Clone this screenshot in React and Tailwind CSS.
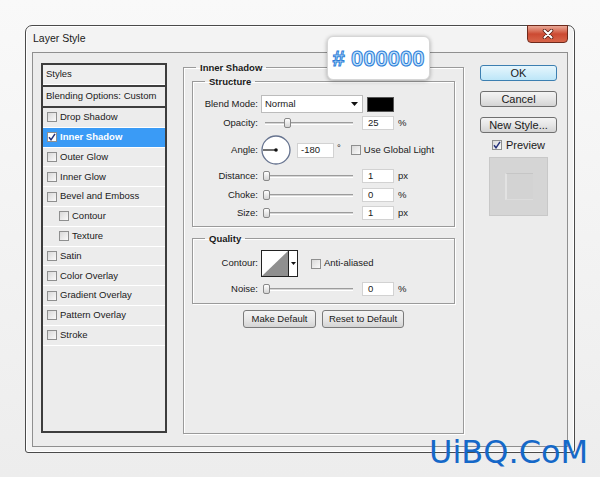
import React from 'react';

const styleRows = [
  { label: 'Drop Shadow' },
  { label: 'Inner Shadow', checked: true, active: true },
  { label: 'Outer Glow' },
  { label: 'Inner Glow' },
  { label: 'Bevel and Emboss' },
  { label: 'Contour', sub: true },
  { label: 'Texture', sub: true },
  { label: 'Satin' },
  { label: 'Color Overlay' },
  { label: 'Gradient Overlay' },
  { label: 'Pattern Overlay' },
  { label: 'Stroke' },
];

function Check({ checked, light }) {
  return (
    <span
      className={`flex h-[10px] w-[10px] shrink-0 items-center justify-center border border-[#8e8f8f] ${
        light ? 'bg-white' : 'bg-gradient-to-br from-[#d9d9d9] to-[#fafafa]'
      }`}
    >
      {checked && (
        <svg width="8" height="8" viewBox="0 0 8 8">
          <path d="M1 4.3 L3 6.8 L7 0.8" fill="none" stroke="#23307a" strokeWidth="1.5" />
        </svg>
      )}
    </span>
  );
}

function Slider({ thumb }) {
  return (
    <div className="relative flex h-[14px] w-[101px] shrink-0 items-center">
      <div className="ml-[4px] h-[3px] w-[88px] border-t border-b border-t-[#9c9c9c] border-b-white bg-[#d6d6d6]" />
      <div
        className={`absolute top-[2px] h-[10px] w-[7px] rounded-[2px] border border-[#888] bg-gradient-to-b from-white to-[#d4d4d4] ${thumb}`}
      />
    </div>
  );
}

function Num({ value, w = 'w-[32px]', h = 'h-[14px]', pl = 'pl-[5px]' }) {
  return (
    <div className={`flex shrink-0 items-center border border-[#d2d2d2] bg-white ${w} ${h} ${pl}`}>
      {value}
    </div>
  );
}

function Label({ children }) {
  return <span className="mr-[3px] w-[65px] shrink-0 text-right">{children}</span>;
}

function SliderRow({ label, value, unit, thumb, className }) {
  return (
    <div className={`flex h-[14px] items-center ${className}`}>
      <Label>{label}</Label>
      <Slider thumb={thumb} />
      <Num value={value} />
      <span className="ml-[4px]">{unit}</span>
    </div>
  );
}

function Button({ children, w, primary }) {
  return (
    <div
      className={`flex h-[16px] items-center justify-center rounded-[3px] border text-[11px] ${w} ${
        primary
          ? 'border-[#3c7fb1] bg-gradient-to-b from-[#e6f6fd] to-[#bde6f8]'
          : 'border-[#707070] bg-gradient-to-b from-[#f4f4f4] via-[#e6e6e6] to-[#d3d3d3]'
      }`}
    >
      {children}
    </div>
  );
}

function SmallButton({ children, w }) {
  return (
    <div
      className={`flex h-[18px] items-center justify-center rounded-[3px] border border-[#7a7a7a] bg-gradient-to-b from-[#f4f4f4] via-[#e8e8e8] to-[#d4d4d4] ${w}`}
    >
      {children}
    </div>
  );
}

const groupBox =
  'm-0 min-w-0 border border-[#9a9a9a] p-0 shadow-[inset_1px_1px_0_#fff,1px_1px_0_#fff]';
const legendCls = 'ml-[12px] px-[4px] text-[9.5px] leading-[11px] font-bold';

export default function App() {
  return (
    <div className="relative h-[477px] w-[600px] overflow-hidden bg-gradient-to-b from-[#f9f9f9] to-[#ededed] pl-[25px] pt-[25px] font-['Liberation_Sans',Arial,sans-serif] text-[#1a1a1a]">
      {/* dialog */}
      <div className="relative flex h-[428px] w-[550px] flex-col rounded-t-[7px] rounded-b-[3px] border border-[#4a4a4a] bg-[#f3f3f3] shadow-[inset_0_0_0_1px_#fff]">
        <div className="flex h-[26px] items-center pl-[7px] text-[10.5px]">Layer Style</div>

        {/* close button */}
        <div className="absolute right-[6px] top-[-1px] flex h-[18px] w-[41px] items-center justify-center rounded-b-[4px] border border-[#6e2a1c] bg-gradient-to-b from-[#e9a897] via-[#cc4a32] to-[#d8654a]">
          <svg width="12" height="10" viewBox="0 0 12 10">
            <path d="M2.5 1.5 L9.5 8.5 M9.5 1.5 L2.5 8.5" stroke="#5a1e14" strokeWidth="3.6" strokeLinecap="round" />
            <path d="M2.5 1.5 L9.5 8.5 M9.5 1.5 L2.5 8.5" stroke="#fff" strokeWidth="2" strokeLinecap="round" />
          </svg>
        </div>

        {/* client area */}
        <div className="mx-[6px] mb-[5px] flex flex-1 border border-[#8f8f8f] bg-[#ececec] pl-[8px] pt-[10px] text-[9.5px]">
          {/* styles list */}
          <div className="flex h-[370px] w-[126px] shrink-0 flex-col border-2 border-[#3d3d3d] bg-[#ececec]">
            <div className="flex h-[20px] items-center border-b border-white bg-[#efefef] pl-[3px]">Styles</div>
            <div className="h-[2px] bg-[#3d3d3d]" />
            <div className="flex h-[21px] items-center border-b-2 border-[#3d3d3d] pl-[3px]">
              Blending Options: Custom
            </div>
            {styleRows.map((r) => (
              <div
                key={r.label}
                className={`flex h-[19.8px] items-center gap-[3px] border-b border-white ${
                  r.sub ? 'pl-[16px]' : 'pl-[4px]'
                } ${r.active ? 'bg-[#3a9bf6] font-bold text-white' : ''}`}
              >
                <Check checked={r.checked} light={r.active} />
                <span>{r.label}</span>
              </div>
            ))}
          </div>

          {/* settings */}
          <div className="-mt-[1px] ml-[16px] w-[281px] shrink-0">
            <fieldset className={`${groupBox} h-[372px]`}>
              <legend className={legendCls}>Inner Shadow</legend>
              <div className="mt-[3px] px-[8px]">
                <fieldset className={`${groupBox} pb-[6px] pt-[8px]`}>
                  <legend className={legendCls}>Structure</legend>
                  <div className="flex h-[18px] items-center">
                    <Label>Blend Mode:</Label>
                    <div className="flex h-[18px] w-[102px] shrink-0 items-center justify-between border border-[#bcbcbc] bg-white pl-[3px] pr-[4px]">
                      <span>Normal</span>
                      <svg width="7" height="4" viewBox="0 0 7 4">
                        <path d="M0 0 H7 L3.5 4 Z" fill="#111" />
                      </svg>
                    </div>
                    <div className="ml-[4px] h-[15px] w-[27px] border border-[#555] bg-black" />
                  </div>
                  <SliderRow label="Opacity:" value="25" unit="%" thumb="left-[23px]" className="mt-[3px]" />
                  <div className="mt-[5px] flex h-[30px] items-center">
                    <Label>Angle:</Label>
                    <svg width="30" height="30" viewBox="0 0 30 30" className="shrink-0">
                      <circle cx="15" cy="15" r="14" fill="#fff" stroke="#66738f" strokeWidth="1.3" />
                      <path d="M15 15 H2" stroke="#111" strokeWidth="1.2" />
                      <circle cx="15" cy="15" r="1.8" fill="#111" />
                    </svg>
                    <div className="ml-[6px]">
                      <Num value="-180" w="w-[37px]" h="h-[15px]" pl="pl-[3px]" />
                    </div>
                    <span className="ml-[3px] self-start pt-[6px]">°</span>
                    <span className="ml-[10px]">
                      <Check />
                    </span>
                    <span className="ml-[3px]">Use Global Light</span>
                  </div>
                  <SliderRow label="Distance:" value="1" unit="px" thumb="left-[2px]" className="mt-[4px]" />
                  <SliderRow label="Choke:" value="0" unit="%" thumb="left-[2px]" className="mt-[5px]" />
                  <SliderRow label="Size:" value="1" unit="px" thumb="left-[2px]" className="mt-[4px]" />
                </fieldset>

                <fieldset className={`${groupBox} mt-[6px] pb-[7px] pt-[6px]`}>
                  <legend className={legendCls}>Quality</legend>
                  <div className="flex h-[27px] items-center">
                    <Label>Contour:</Label>
                    <div className="flex h-[27px] w-[37px] shrink-0 border border-[#222] bg-white">
                      <svg width="26" height="25" viewBox="0 0 26 25" className="shrink-0">
                        <polygon points="0,25 26,0 26,25" fill="#8f8f8f" />
                      </svg>
                      <div className="flex flex-1 items-center justify-center border-l border-[#222]">
                        <svg width="5" height="3" viewBox="0 0 5 3">
                          <path d="M0 0 H5 L2.5 3 Z" fill="#111" />
                        </svg>
                      </div>
                    </div>
                    <span className="ml-[13px]">
                      <Check />
                    </span>
                    <span className="ml-[3px]">Anti-aliased</span>
                  </div>
                  <SliderRow label="Noise:" value="0" unit="%" thumb="left-[2px]" className="mt-[5px]" />
                </fieldset>

                <div className="mt-[6px] flex justify-center gap-[6px]">
                  <SmallButton w="w-[73px]">Make Default</SmallButton>
                  <SmallButton w="w-[82px]">Reset to Default</SmallButton>
                </div>
              </div>
            </fieldset>
          </div>

          {/* buttons column */}
          <div className="ml-[16px] mt-[2px] flex w-[77px] shrink-0 flex-col items-center">
            <Button w="w-[77px]" primary>OK</Button>
            <div className="mt-[10px]">
              <Button w="w-[77px]">Cancel</Button>
            </div>
            <div className="mt-[10px]">
              <Button w="w-[77px]">New Style...</Button>
            </div>
            <div className="mt-[7px] flex h-[10px] items-center gap-[4px] text-[11px]">
              <Check checked />
              <span>Preview</span>
            </div>
            <div className="mt-[7px] h-[59px] w-[59px] border border-[#c8c8c8] bg-[#d5d5d5] pl-[15px] pt-[15px]">
              <div className="h-[27px] w-[28px] border-l-2 border-t border-l-[#e2e2e2] border-t-[#c6c6c6] border-b border-b-[#dcdcdc] bg-[#d3d3d3]" />
            </div>
          </div>
        </div>
      </div>

      {/* colour callout */}
      <div className="absolute left-[327px] top-[36px] flex h-[44px] w-[103px] items-center justify-center rounded-[6px] border border-[#d6d6d6] bg-white shadow-[0_1px_4px_rgba(0,0,0,0.3)]">
        <span className="text-[22px] font-bold text-[#c3e2fb] [-webkit-text-stroke:1px_#2c7fd9]">
          # 000000
        </span>
      </div>

      {/* watermark */}
      <div className="absolute left-[429px] top-[436px] font-['DejaVu_Sans',sans-serif] text-[32px] leading-[32px] text-[#1568c8]">
        UiBQ.CoM
      </div>
    </div>
  );
}
